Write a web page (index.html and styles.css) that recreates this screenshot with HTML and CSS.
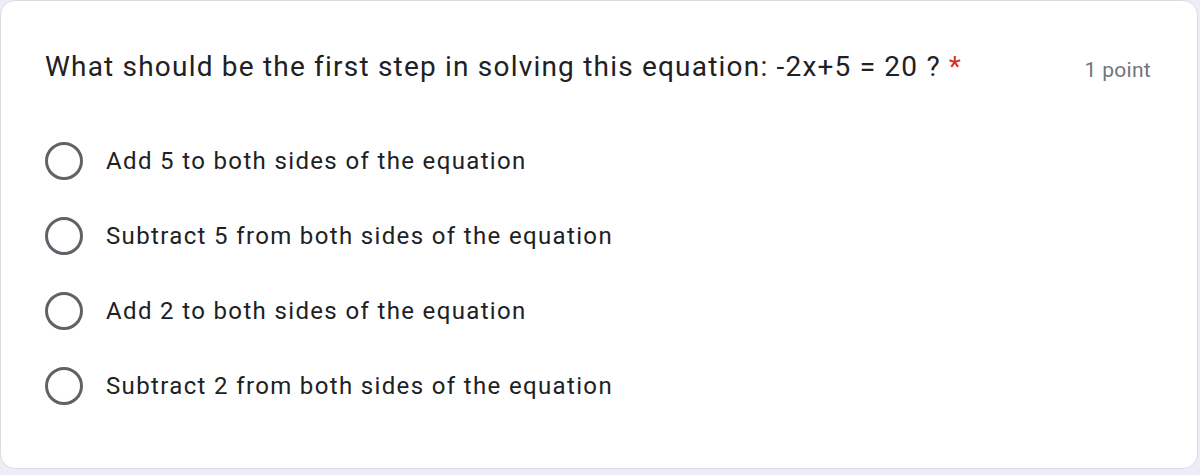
FILE: index.html
```html
<!DOCTYPE html>
<html lang="en">
<head>
<meta charset="utf-8">
<title>Question</title>
<link rel="stylesheet" href="styles.css">
</head>
<body>
<div class="card">
  <div class="header">
    <div class="question">What should be the first step in solving this equation: -2x+5 = 20 ?<span class="req">*</span></div>
    <div class="points">1 point</div>
  </div>
  <div class="options">
    <div class="option"><span class="radio"></span><span class="label">Add 5 to both sides of the equation</span></div>
    <div class="option"><span class="radio"></span><span class="label">Subtract 5 from both sides of the equation</span></div>
    <div class="option"><span class="radio"></span><span class="label">Add 2 to both sides of the equation</span></div>
    <div class="option"><span class="radio"></span><span class="label">Subtract 2 from both sides of the equation</span></div>
  </div>
</div>
</body>
</html>
```

FILE: styles.css
```css
html, body {
  margin: 0;
  padding: 0;
}
body {
  background: #f0ebf8;
  width: 1200px;
  height: 475px;
  overflow: hidden;
  font-family: Roboto, "Liberation Sans", sans-serif;
}
.card {
  box-sizing: border-box;
  width: 1198px;
  height: 469px;
  background: #fff;
  border: 1px solid #dadce0;
  border-radius: 15px;
  padding: 42px 46px 0 44px;
}
.header {
  display: flex;
  justify-content: space-between;
  align-items: flex-start;
}
.question {
  font-size: 28px;
  line-height: 48px;
  color: #202124;
  letter-spacing: 1.2px;
}
.req {
  color: #d93025;
  margin-left: 8px;
}
.points {
  font-size: 21px;
  line-height: 48px;
  color: #70757a;
  padding-top: 3px;
  letter-spacing: 0.3px;
}
.options {
  display: flex;
  flex-direction: column;
  margin-top: 48px;
  gap: 37px;
}
.option {
  display: flex;
  align-items: center;
  height: 38px;
}
.radio {
  box-sizing: border-box;
  width: 38px;
  height: 38px;
  border: 3.5px solid #5f6368;
  border-radius: 50%;
  flex: none;
}
.label {
  margin-left: 23px;
  font-size: 24px;
  letter-spacing: 1.35px;
  color: #202124;
}
```
